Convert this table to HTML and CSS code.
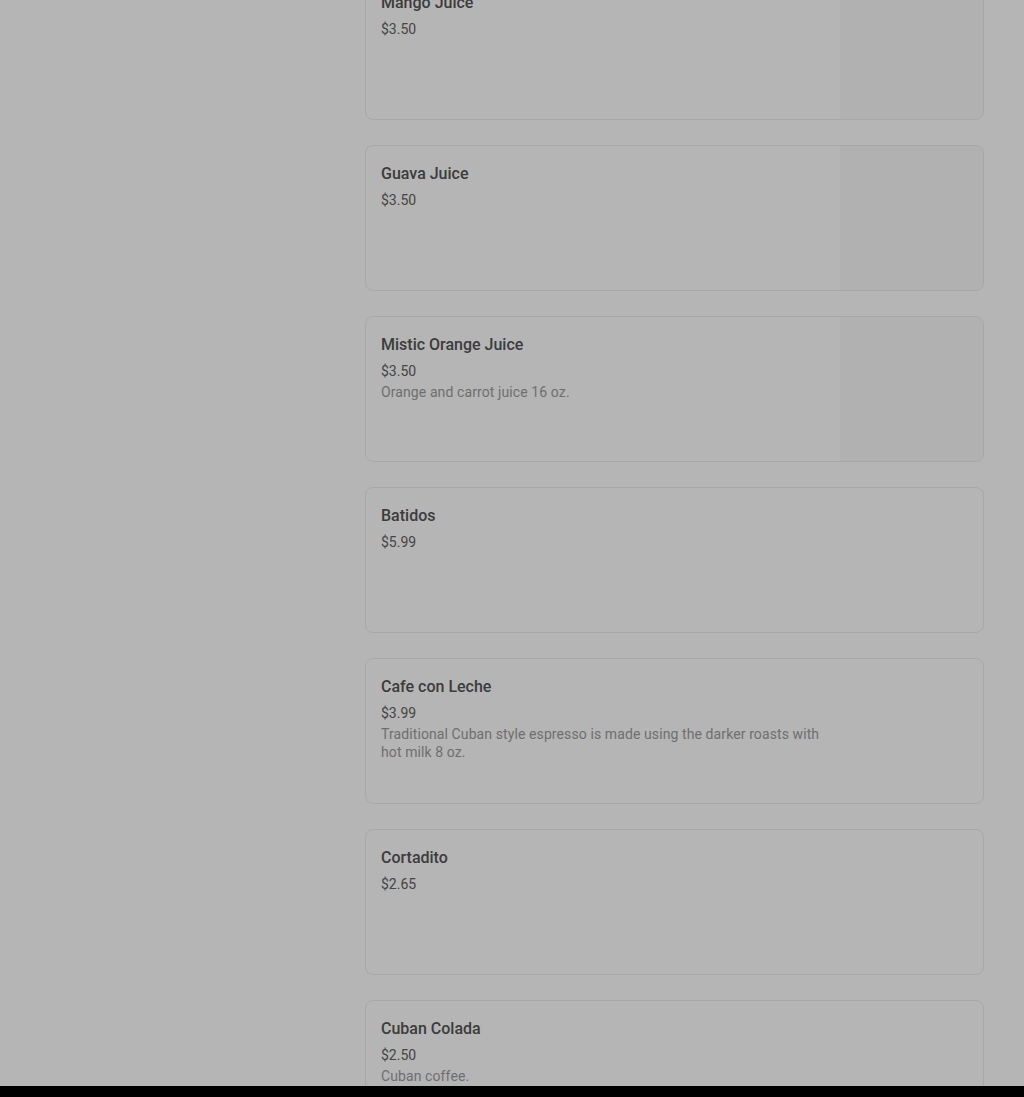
FILE: index.html
```html
<!DOCTYPE html>
<html lang="en">
<head>
    <meta charset="UTF-8">
    <meta name="viewport" content="width=device-width, initial-scale=1.0">
    <title>Menu</title>
    <link rel="stylesheet" href="styles.css">
</head>
<body>

    <div class="page">
        <!-- Left column (categories), empty at this scroll position -->
        <aside class="sidebar"></aside>

        <!-- Menu items -->
        <main class="menu-list">
            <div class="item">
                <div class="info">
                    <h3>Mango Juice</h3>
                    <p class="price">$3.50</p>
                </div>
                <div class="thumb"></div>
            </div>

            <div class="item">
                <div class="info">
                    <h3>Guava Juice</h3>
                    <p class="price">$3.50</p>
                </div>
                <div class="thumb"></div>
            </div>

            <div class="item">
                <div class="info">
                    <h3>Mistic Orange Juice</h3>
                    <p class="price">$3.50</p>
                    <p class="desc">Orange and carrot juice 16 oz.</p>
                </div>
                <div class="thumb"></div>
            </div>

            <div class="item">
                <div class="info">
                    <h3>Batidos</h3>
                    <p class="price">$5.99</p>
                </div>
            </div>

            <div class="item">
                <div class="info">
                    <h3>Cafe con Leche</h3>
                    <p class="price">$3.99</p>
                    <p class="desc">Traditional Cuban style espresso is made using the darker roasts with hot milk 8 oz.</p>
                </div>
            </div>

            <div class="item">
                <div class="info">
                    <h3>Cortadito</h3>
                    <p class="price">$2.65</p>
                </div>
            </div>

            <div class="item">
                <div class="info">
                    <h3>Cuban Colada</h3>
                    <p class="price">$2.50</p>
                    <p class="desc">Cuban coffee.</p>
                </div>
            </div>
        </main>
    </div>

    <!-- Modal backdrop dims the page -->
    <div class="backdrop"></div>
    <div class="sheet-edge"></div>

</body>
</html>
```

FILE: styles.css
```css
* {
    margin: 0;
    padding: 0;
    box-sizing: border-box;
}

body {
    font-family: Roboto, 'Liberation Sans', sans-serif;
    background-color: #fff;
    color: #545454;
    overflow: hidden;
}

.page {
    display: grid;
    grid-template-columns: 365px 619px;
    padding-right: 40px;
}

.menu-list {
    display: flex;
    flex-direction: column;
    gap: 25px;
    margin-top: -26px;
}

.item {
    display: flex;
    height: 146px;
    border: 1px solid #ececec;
    border-radius: 8px;
    overflow: hidden;
}

.info {
    flex: 1;
    padding: 16px 15px 14px;
}

.info h3 {
    font-size: 16px;
    font-weight: 500;
    line-height: 24px;
    color: #555;
}

.price {
    margin-top: 4px;
    font-size: 14px;
    line-height: 20px;
    color: #626262;
}

.desc {
    margin-top: 2px;
    max-width: 450px;
    font-size: 14px;
    line-height: 18px;
    letter-spacing: 0.1px;
    color: #9c9c9c;
}

.thumb {
    width: 143px;
    background-color: #fafafa;
}

.backdrop {
    position: fixed;
    inset: 0;
    background-color: rgba(0, 0, 0, 0.29);
}

.sheet-edge {
    position: fixed;
    left: 0;
    right: 0;
    bottom: 0;
    height: 11px;
    background-color: #000;
}
```
